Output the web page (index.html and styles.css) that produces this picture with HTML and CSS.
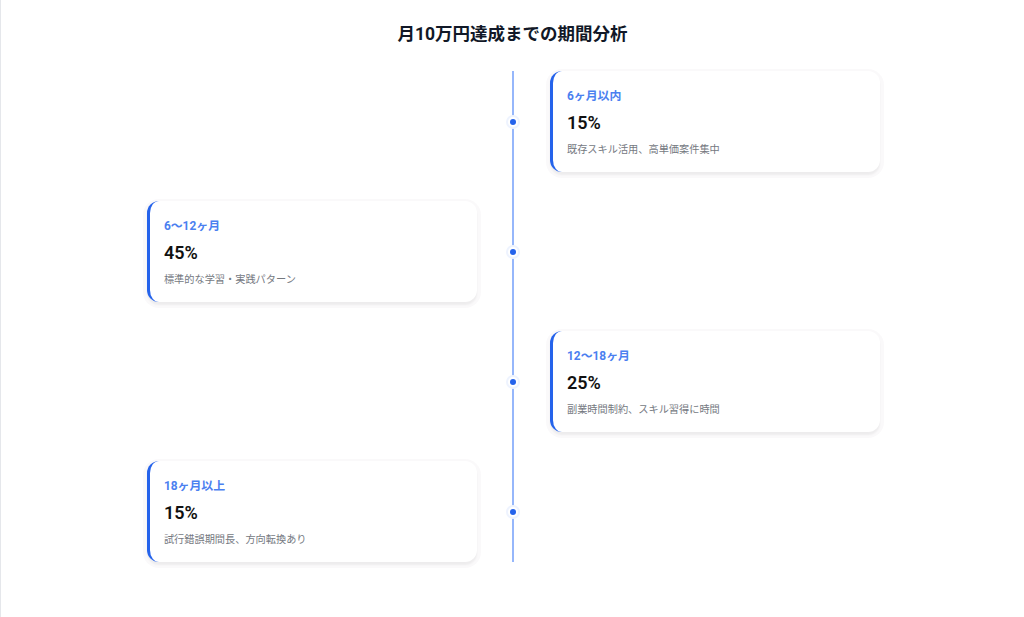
FILE: index.html
```html
<!DOCTYPE html>
<html lang="ja">
<head>
<meta charset="utf-8">
<title>月10万円達成までの期間分析</title>
<link rel="stylesheet" href="styles.css">
</head>
<body>
<main class="page">
  <h1 class="title">月10万円達成までの期間分析</h1>
  <div class="timeline">
    <div class="row">
      <div class="slot"></div>
      <div class="node"><span class="dot"></span></div>
      <section class="card"><div class="label">6ヶ月以内</div><div class="value">15%</div><div class="desc">既存スキル活用、高単価案件集中</div></section>
    </div>
    <div class="row">
      <section class="card card-left"><div class="label">6〜12ヶ月</div><div class="value">45%</div><div class="desc">標準的な学習・実践パターン</div></section>
      <div class="node"><span class="dot"></span></div>
      <div class="slot"></div>
    </div>
    <div class="row">
      <div class="slot"></div>
      <div class="node"><span class="dot"></span></div>
      <section class="card"><div class="label">12〜18ヶ月</div><div class="value">25%</div><div class="desc">副業時間制約、スキル習得に時間</div></section>
    </div>
    <div class="row">
      <section class="card card-left"><div class="label">18ヶ月以上</div><div class="value">15%</div><div class="desc">試行錯誤期間長、方向転換あり</div></section>
      <div class="node"><span class="dot"></span></div>
      <div class="slot"></div>
    </div>
  </div>
</main>
</body>
</html>
```

FILE: styles.css
```css
* { box-sizing: border-box; }
html, body { margin: 0; height: 100%; }
body {
  background: #fff;
  font-family: Roboto, "Noto Sans CJK JP", sans-serif;
  color: #111;
  overflow: hidden;
}
.page {
  min-height: 617px;
  border-left: 1px solid #e5e7eb;
  padding-top: 21px;
}
.title {
  margin: 0 0 24px;
  text-align: center;
  font-size: 17.5px;
  line-height: 26px;
  font-weight: 700;
  color: #111827;
}
.timeline {
  position: relative;
  width: 732.6px;
  margin-left: 146.4px;
  display: flex;
  flex-direction: column;
  gap: 29px;
}
.timeline::before {
  content: "";
  position: absolute;
  top: 0;
  bottom: 0;
  left: 364.6px;
  width: 2px;
  background: #96b7fb;
}
.row {
  display: grid;
  grid-template-columns: 330px 72.6px 330px;
}
.node {
  position: relative;
  display: flex;
  align-items: center;
  justify-content: flex-start;
  padding-left: 32.6px;
}
.dot {
  width: 6px;
  height: 6px;
  border-radius: 50%;
  background: #2563eb;
  box-shadow: 0 0 0 2px #fff, 0 0 0 4px #eef3fe;
}
.card {
  background: #fff;
  border-left: 3px solid #2563eb;
  border-radius: 12px;
  padding: 17px 14px 14px;
  box-shadow: 0 3px 2px rgba(0, 0, 0, 0.05), 0 2px 0 4px rgba(120, 80, 100, 0.035);
}
.card-left { padding-left: 13.5px; }
.label {
  font-size: 11.9px;
  line-height: 17px;
  font-weight: 700;
  color: #4b80f0;
}
.value {
  margin-top: 6px;
  font-size: 18px;
  line-height: 24px;
  font-weight: 600;
  color: #111;
}
.desc {
  margin-top: 7px;
  font-size: 10.2px;
  line-height: 16px;
  color: #75797f;
}
```
